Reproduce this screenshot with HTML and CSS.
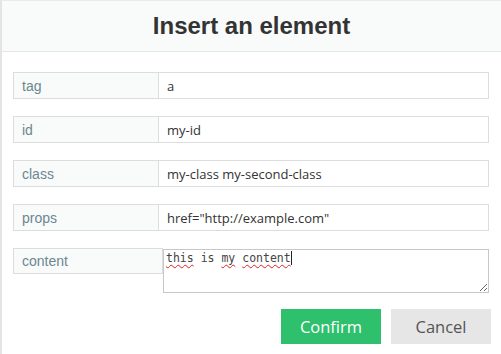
FILE: index.html
```html
<!DOCTYPE html>
<html lang="en">
<head>
    <meta charset="UTF-8">
    <title>Insert an element</title>
    <link rel="stylesheet" href="styles.css">
</head>
<body>
    <div class="modal">
        <div class="modal-header">
            <h2>Insert an element</h2>
        </div>
        <div class="modal-body">
            <div class="field">
                <label class="field-label">tag</label>
                <input class="field-input" type="text" value="a">
            </div>
            <div class="field">
                <label class="field-label">id</label>
                <input class="field-input" type="text" value="my-id">
            </div>
            <div class="field">
                <label class="field-label">class</label>
                <input class="field-input" type="text" value="my-class my-second-class">
            </div>
            <div class="field">
                <label class="field-label">props</label>
                <input class="field-input" type="text" value='href="http://example.com"'>
            </div>
            <div class="field field-content">
                <label class="field-label">content</label>
                <div class="content-box"><span class="typo">this</span> is <span class="typo">my</span> <span class="typo">content</span><span class="caret"></span></div>
            </div>
        </div>
        <div class="modal-footer">
            <button class="btn btn-confirm">Confirm</button>
            <button class="btn btn-cancel">Cancel</button>
        </div>
    </div>
</body>
</html>
```

FILE: styles.css
```css
body {
    margin: 0;
    padding: 0;
    width: 501px;
    height: 354px;
    overflow: hidden;
    background-color: white;
    font-family: 'Liberation Sans', Arial, sans-serif;
}

.modal {
    height: 354px;
    box-sizing: border-box;
    border-top: 1px solid #e9ebeb;
    border-left: 2px solid #e4e4e4;
    background-color: white;
}

.modal-header {
    height: 50px;
    background-color: #f9fafa;
    border-bottom: 1px solid #e3e6e6;
    display: flex;
    align-items: center;
    justify-content: center;
}

.modal-header h2 {
    margin: 0;
    font-size: 24px;
    font-weight: bold;
    color: #333;
}

.modal-body {
    padding: 20px 12px 0 11px;
}

.field {
    display: flex;
    height: 27px;
    box-sizing: border-box;
    border: 1px solid #dcdede;
    margin-bottom: 17px;
}

.field-label {
    width: 145px;
    flex-shrink: 0;
    box-sizing: border-box;
    padding-left: 8px;
    background-color: #f9fafa;
    border-right: 1px solid #dcdede;
    color: #6b8791;
    font-size: 14px;
    display: flex;
    align-items: center;
}

.field-input {
    flex-grow: 1;
    min-width: 0;
    border: none;
    outline: none;
    padding: 0 8px;
    margin: 0;
    font-family: 'Open Sans', sans-serif;
    font-size: 13px;
    color: #333;
    background-color: white;
}

.field-content {
    border: none;
    height: auto;
    align-items: flex-start;
    margin-bottom: 16px;
}

.field-content .field-label {
    width: 150px;
    height: 26px;
    border: 1px solid #dcdede;
}

.content-box {
    flex-grow: 1;
    height: 44px;
    margin-top: 1px;
    box-sizing: border-box;
    border: 1px solid #c9c7c4;
    padding: 1px 2px;
    font-family: 'DejaVu Sans Mono', monospace;
    font-size: 11.5px;
    line-height: 15px;
    color: #444;
    resize: vertical;
    overflow: auto;
}

.typo {
    text-decoration: underline wavy #e02020;
    text-decoration-thickness: 1px;
    text-underline-offset: 2px;
}

.caret {
    display: inline-block;
    width: 1px;
    height: 14px;
    background-color: #222;
    vertical-align: -3px;
}

.modal-footer {
    display: flex;
    justify-content: flex-end;
    gap: 10px;
    padding-right: 10px;
}

.btn {
    width: 100px;
    height: 35px;
    border: none;
    border-radius: 0;
    font-family: 'Open Sans', sans-serif;
    font-size: 16.5px;
    cursor: pointer;
}

.btn-confirm {
    background-color: #2ec06c;
    color: white;
}

.btn-cancel {
    background-color: #e6e6e6;
    color: #555;
}
```
